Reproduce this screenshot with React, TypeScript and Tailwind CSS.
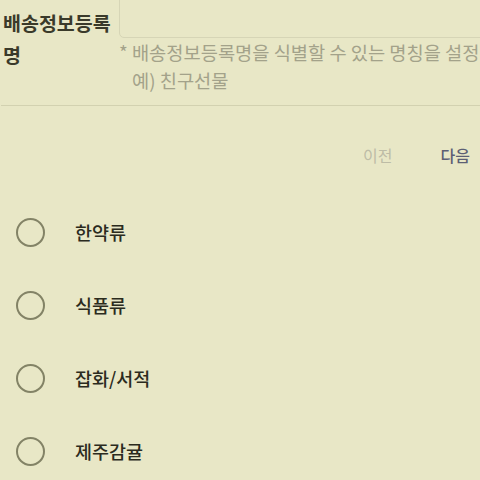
const options = ['한약류', '식품류', '잡화/서적', '제주감귤'];

export default function App() {
  return (
    <div
      className="w-[480px] h-[480px] overflow-hidden bg-[#e8e7c6] text-[#2b2b1e]"
      style={{ fontFamily: '"Noto Sans CJK KR", "Noto Sans", sans-serif' }}
    >
      <div className="flex border-b border-[#d2d1b0] ml-[1px] pb-[11px]">
        <div className="w-[118px] shrink-0 pl-[2px] pt-[7px] text-[19.5px] font-bold leading-[32px] text-[#3a3a2a]">
          배송정보등록명
        </div>
        <div className="flex-1 min-w-0">
          <div className="h-[39px] -mt-[1px] border border-[#d6d5b6] rounded-bl-[5px] w-[400px]" />
          <div className="text-[18.7px] leading-[28px] text-[#a3a28a] whitespace-nowrap">
            <div>* 배송정보등록명을 식별할 수 있는 명칭을 설정</div>
            <div className="pl-[13px]">예) 친구선물</div>
          </div>
        </div>
      </div>

      <div className="flex justify-end items-center gap-[48px] pr-[10px] mt-[37px] h-[24px] text-[16px]">
        <span className="text-[#bdbca6]">이전</span>
        <span className="text-[#5c5f74] font-medium">다음</span>
      </div>

      <div className="flex flex-col mt-[51px] gap-[44px]">
        {options.map((o) => (
          <div key={o} className="flex items-center h-[29px]">
            <span className="ml-[16px] w-[29px] h-[29px] rounded-full border-2 border-[#838366]" />
            <span className="ml-[30px] text-[18.5px] font-medium text-[#2b2b1e]">{o}</span>
          </div>
        ))}
      </div>
    </div>
  );
}
